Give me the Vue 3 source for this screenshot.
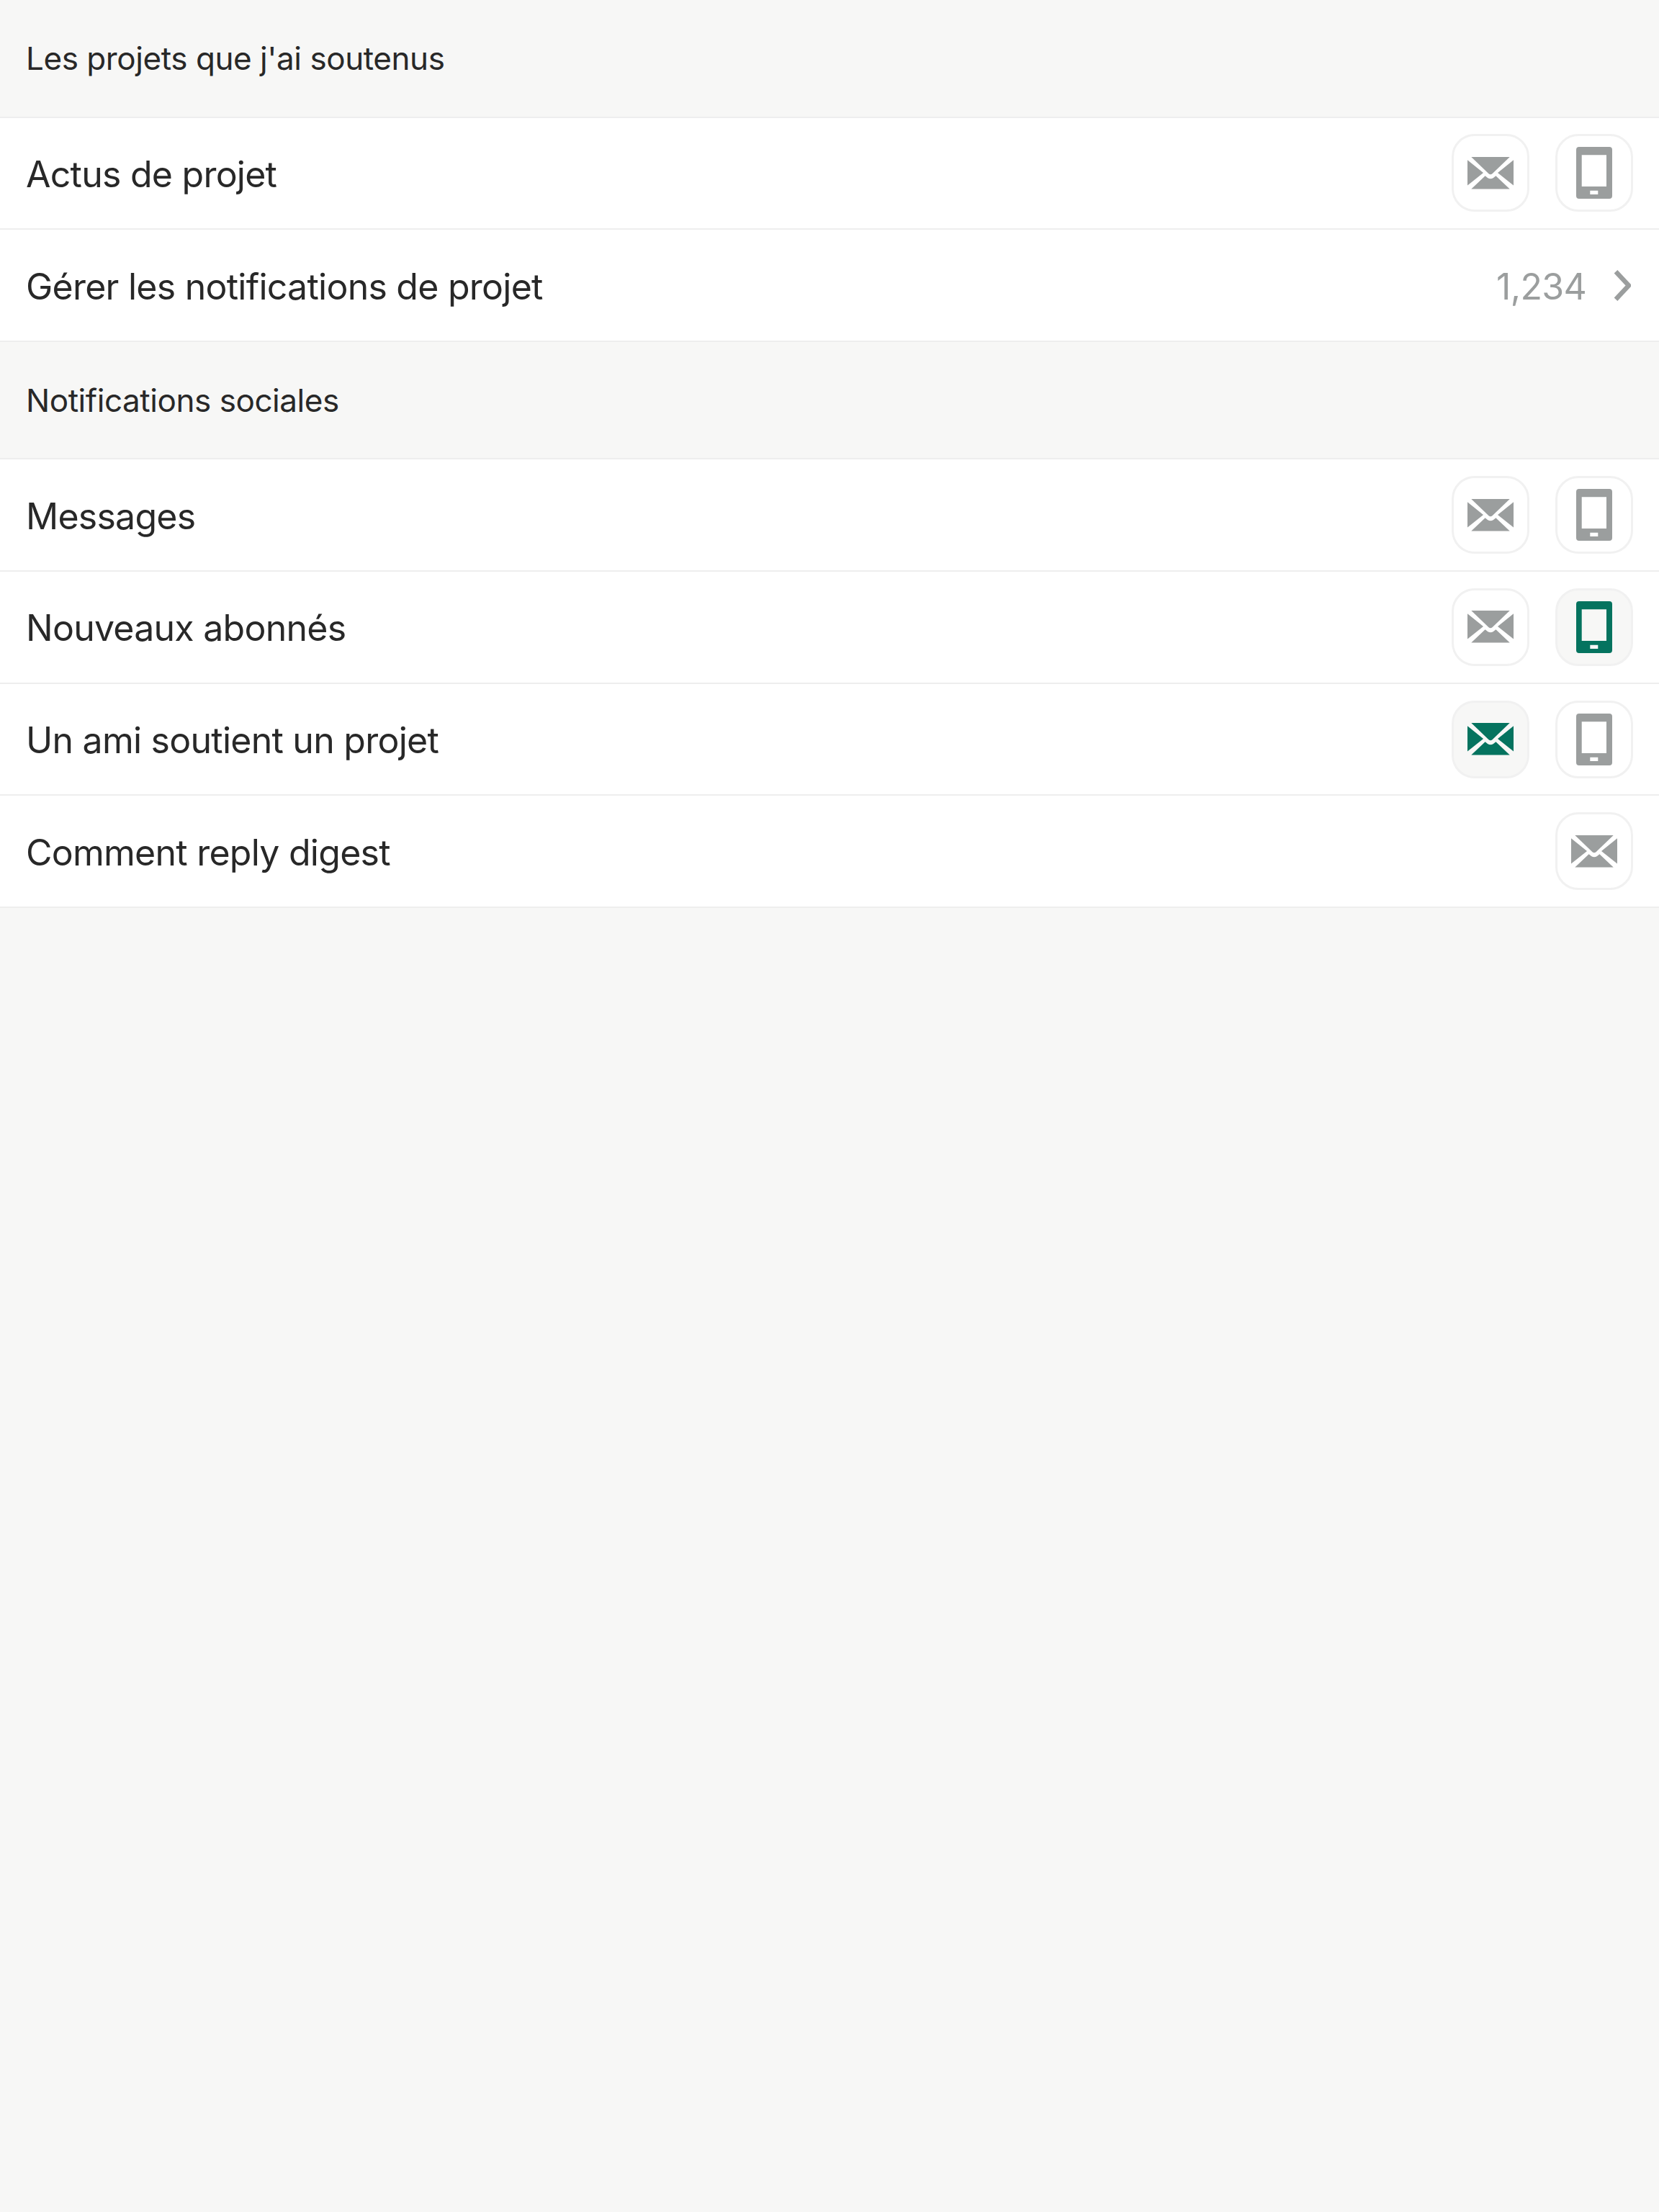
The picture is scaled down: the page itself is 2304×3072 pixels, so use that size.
<script setup>
const sections = [
  {
    title: "Les projets que j'ai soutenus",
    rows: [
      { label: 'Actus de projet', toggles: [{ icon: 'mail' }, { icon: 'phone' }] },
      { label: 'Gérer les notifications de projet', count: '1,234' },
    ],
  },
  {
    title: 'Notifications sociales',
    rows: [
      { label: 'Messages', toggles: [{ icon: 'mail' }, { icon: 'phone' }] },
      { label: 'Nouveaux abonnés', toggles: [{ icon: 'mail' }, { icon: 'phone', on: true }] },
      { label: 'Un ami soutient un projet', toggles: [{ icon: 'mail', on: true }, { icon: 'phone' }] },
      { label: 'Comment reply digest', toggles: [{ icon: 'mail' }] },
    ],
  },
]
</script>

<template>
  <div class="page">
    <section v-for="section in sections" :key="section.title">
      <h2 class="section-title">{{ section.title }}</h2>
      <div v-for="row in section.rows" :key="row.label" class="row">
        <span class="row-label">{{ row.label }}</span>
        <div v-if="row.toggles" class="toggles">
          <button
            v-for="toggle in row.toggles"
            :key="toggle.icon"
            :class="['toggle', { 'toggle-on': toggle.on }]"
          >
            <svg v-if="toggle.icon === 'mail'" class="icon-mail" viewBox="0 0 64 45" fill="currentColor">
              <path d="M5.3 0H58.7L34.5 23.2Q32 25.4 29.5 23.2Z" />
              <path d="M0 4.3L22 21.9L0 39.6Z" />
              <path d="M64 4.3L42 21.9L64 39.6Z" />
              <path d="M5.3 44.6L24.6 26.2L28 29Q32 31.6 36 29L39.4 26.2L58.7 44.6Z" />
            </svg>
            <svg v-else class="icon-phone" viewBox="0 0 50 72" fill="currentColor">
              <path
                fill-rule="evenodd"
                d="M4 0H46Q50 0 50 4V68Q50 72 46 72H4Q0 72 0 68V4Q0 0 4 0ZM7.7 11.3V55H42V11.3ZM19.3 60.7V66H30.3V60.7Z"
              />
            </svg>
          </button>
        </div>
        <div v-else class="count">
          <span>{{ row.count }}</span>
          <svg class="chevron" viewBox="0 0 24 43" fill="none" stroke="currentColor" stroke-width="6.4">
            <path d="M3 2.2L21 21.5L3 40.8" />
          </svg>
        </div>
      </div>
    </section>
  </div>
</template>

<style scoped>
.page {
  min-height: 3072px;
  background: #f7f7f6;
  color: #282828;
  font-family: Inter, "Liberation Sans", sans-serif;
}

.section-title {
  box-sizing: border-box;
  display: flex;
  align-items: center;
  height: 163.5px;
  margin: 0;
  padding: 0 36px;
  border-bottom: 2px solid #eeeeee;
  font-size: 44px;
  font-weight: 400;
  letter-spacing: -0.44px;
}

.row {
  box-sizing: border-box;
  display: flex;
  align-items: center;
  justify-content: space-between;
  height: 155.7px;
  padding: 0 36px;
  background: #ffffff;
  border-bottom: 2px solid #eeeeee;
}

.row-label {
  padding-top: 3px;
  font-size: 50px;
  letter-spacing: -0.75px;
}

.toggles {
  display: flex;
  gap: 36px;
}

.toggle {
  box-sizing: border-box;
  display: flex;
  align-items: center;
  justify-content: center;
  width: 108px;
  height: 108px;
  padding: 0;
  background: #ffffff;
  border: 3px solid #f1f1f1;
  border-radius: 32px;
  color: #9b9e9e;
}

.toggle-on {
  background: #f7f7f6;
  color: #05735f;
}

.icon-mail {
  width: 64px;
  height: 45px;
}

.icon-phone {
  width: 50px;
  height: 72px;
}

.count {
  display: flex;
  align-items: center;
  gap: 38px;
  padding-top: 3px;
  color: #9b9e9e;
  font-size: 50px;
  letter-spacing: -0.7px;
}

.chevron {
  width: 24px;
  height: 43px;
  margin-top: -3px;
  margin-right: 3px;
}
</style>
